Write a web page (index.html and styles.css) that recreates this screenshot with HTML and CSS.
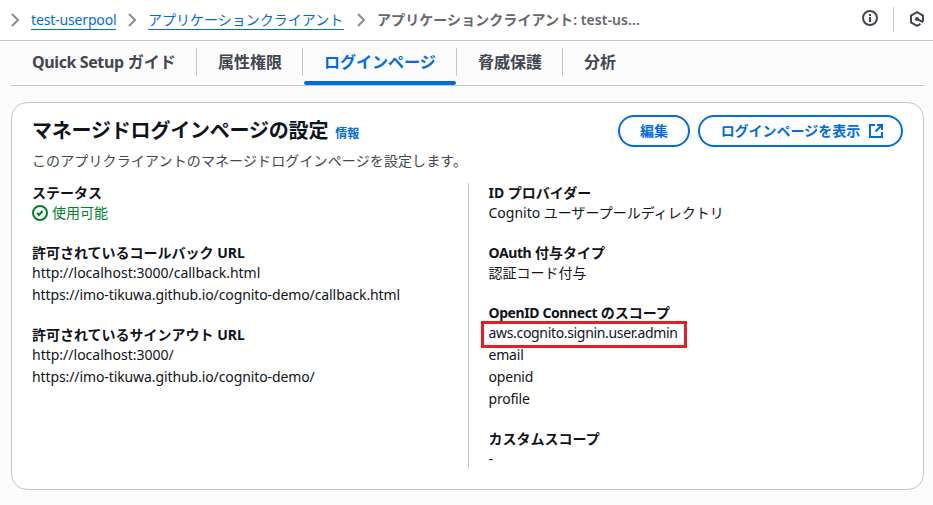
FILE: index.html
```html
<!DOCTYPE html>
<html lang="ja">
<head>
<meta charset="utf-8">
<title>Amazon Cognito</title>
<link rel="stylesheet" href="styles.css">
</head>
<body>
<header class="topbar">
  <nav class="crumbs">
    <svg class="chev" viewBox="0 0 16 16"><path d="M5 2l6 6-6 6"/></svg>
    <a class="crumb crumb-pool" href="#">test-userpool</a>
    <svg class="chev" viewBox="0 0 16 16"><path d="M5 2l6 6-6 6"/></svg>
    <a class="crumb crumb-clients" href="#">アプリケーションクライアント</a>
    <svg class="chev" viewBox="0 0 16 16"><path d="M5 2l6 6-6 6"/></svg>
    <span class="crumb-current">アプリケーションクライアント: test-us...</span>
  </nav>
  <div class="tools">
    <svg class="icon-info" viewBox="0 0 16 16"><circle cx="8" cy="8" r="7"/><path d="M8 12V7M8 6V4"/></svg>
    <svg class="icon-hex" viewBox="0 0 16 16"><path d="M14 10.500V4.500L8 1.200 2 4.500v7l6 3.300 3.500-2"/><path d="M8 8l6 3.200"/><circle class="dot" cx="8" cy="8" r="2"/></svg>
  </div>
</header>
<main>
  <nav class="tabs">
    <a class="tab tab-setup"><span class="lat">Quick Setup</span> ガイド</a>
    <a class="tab tab-attr">属性権限</a>
    <a class="tab tab-login active">ログインページ</a>
    <a class="tab tab-threat">脅威保護</a>
    <a class="tab tab-last">分析</a>
  </nav>
  <section class="card">
    <div class="card-head">
      <div>
        <h2>マネージドログインページの設定<a class="info">情報</a></h2>
        <p class="desc">このアプリクライアントのマネージドログインページを設定します。</p>
      </div>
      <div class="actions">
        <button class="btn btn-edit">編集</button>
        <button class="btn btn-view">ログインページを表示<svg viewBox="0 0 16 16"><path d="M7 2H2v12h12V9"/><path d="M9 2h5v5M14 2L7.500 8.500"/></svg></button>
      </div>
    </div>
    <div class="columns">
      <dl class="col">
        <dt>ステータス</dt>
        <dd class="status"><svg viewBox="0 0 16 16"><circle cx="8" cy="8" r="7"/><path d="M5 8l2 2 3.500-4"/></svg>使用可能</dd>
        <dt>許可されているコールバック URL</dt>
        <dd>http://localhost:3000/callback.html</dd>
        <dd class="url">https://imo-tikuwa.github.io/cognito-demo/callback.html</dd>
        <dt>許可されているサインアウト URL</dt>
        <dd>http://localhost:3000/</dd>
        <dd class="url">https://imo-tikuwa.github.io/cognito-demo/</dd>
      </dl>
      <dl class="col col-right">
        <dt>ID プロバイダー</dt>
        <dd>Cognito ユーザープールディレクトリ</dd>
        <dt><span class="lat">OAuth</span> 付与タイプ</dt>
        <dd>認証コード付与</dd>
        <dt><span class="lat">OpenID Connect</span> のスコープ</dt>
        <dd><span class="marked">aws.cognito.signin.user.admin</span></dd>
        <dd class="scope">email</dd>
        <dd class="scope">openid</dd>
        <dd class="scope">profile</dd>
        <dt>カスタムスコープ</dt>
        <dd>-</dd>
      </dl>
    </div>
  </section>
</main>
</body>
</html>
```
FILE: styles.css
```css
*, *::before, *::after { box-sizing: border-box; }
body {
  margin: 0;
  height: 505px;
  overflow: hidden;
  background: #fcfcfd;
  color: #0f141a;
  font: 14px/20px "Noto Sans", "Noto Sans CJK JP", sans-serif;
  white-space: nowrap;
}
svg { fill: none; stroke: currentColor; stroke-width: 2; flex: none; }
.topbar {
  height: 41px;
  background: #fff;
  border-bottom: 1px solid #c6c6cd;
  display: flex;
  justify-content: space-between;
}
.crumbs { display: flex; align-items: center; padding-left: 7px; height: 40px; }
.chev { width: 16px; height: 16px; color: #8c8c94; margin-right: 8px; }
.crumb {
  color: #006ce0;
  text-decoration: none;
  border-bottom: 1px solid #006ce0;
  line-height: 18px;
  margin-right: 8px;
}
.crumb-pool { width: 85px; letter-spacing: -0.15px; }
.crumb-clients { width: 196px; margin-right: 9px; }
.crumb-current { color: #656871; font-weight: 600; letter-spacing: 0.07px; }
.tools { position: relative; display: flex; color: #424650; padding-right: 8px; }
.tools svg { width: 16px; height: 16px; }
.tools::after {
  content: "";
  position: absolute;
  left: 31px;
  top: 7px;
  width: 1px;
  height: 25px;
  background: #c6c6cd;
}
.icon-info { margin-top: 10px; }
.icon-hex { margin-top: 11px; margin-left: 31px; }
.dot { fill: currentColor; stroke: none; }
main { padding: 0 9px 0 11px; }
.tabs {
  display: flex;
  height: 45px;
  border-bottom: 1px solid #c6c6cd;
  font-size: 16px;
  font-weight: 700;
  color: #424650;
}
.tab { position: relative; line-height: 42px; padding-left: 21px; }
.tab:not(.tab-last)::after {
  content: "";
  position: absolute;
  right: 0;
  top: 7px;
  width: 1px;
  height: 28px;
  background: #c6c6cd;
}
.tab-setup { width: 186px; }
.tab-attr { width: 106px; }
.tab-login { width: 154px; }
.tab-threat { width: 106px; }
.active { color: #006ce0; }
.active::before {
  content: "";
  position: absolute;
  left: 1px;
  right: 1px;
  bottom: 0;
  height: 4px;
  border-radius: 2px;
  background: #006ce0;
}
.card {
  margin-top: 16px;
  height: 388px;
  border: 1px solid #c6c6cd;
  border-radius: 16px;
  background: #fff;
  padding: 12px 20px 0;
}
.card-head { display: flex; justify-content: space-between; height: 68px; }
h2 {
  margin: 0;
  padding-top: 4px;
  font-size: 20px;
  line-height: 24px;
  font-weight: 700;
  letter-spacing: -0.2px;
}
.info { color: #006ce0; font-size: 12px; letter-spacing: 0; margin-left: 7px; }
.desc { margin: 5px 0 0; color: #424650; letter-spacing: 0.12px; }
.actions { display: flex; gap: 8px; }
.btn {
  height: 32px;
  border: 2px solid #006ce0;
  border-radius: 16px;
  background: #fff;
  color: #006ce0;
  font: 700 14px/20px "Noto Sans", "Noto Sans CJK JP", sans-serif;
  padding: 0;
  display: flex;
  align-items: center;
  justify-content: center;
}
.btn svg { width: 16px; height: 16px; margin-left: 8px; }
.btn-edit { width: 72px; }
.btn-view { width: 205px; padding-left: 4px; }
.columns { display: grid; grid-template-columns: 436px 1fr; }
.col { margin: 0; padding-top: 1px; height: 286px; }
.col-right { border-left: 1px solid #c6c6cd; padding-left: 19.5px; }
dt { font-weight: 700; line-height: 18px; height: 18px; }
dd { margin: 0; line-height: 22px; height: 22px; }
dd + dt { margin-top: 20px; }
.lat { letter-spacing: -0.4px; }
.url { letter-spacing: -0.1px; }
.scope { letter-spacing: -0.2px; }
.status { display: flex; align-items: center; gap: 4px; color: #00802f; }
.status svg { width: 16px; height: 16px; }
.marked { position: relative; letter-spacing: -0.33px; }
.marked::before {
  content: "";
  position: absolute;
  left: -7.5px;
  top: -2px;
  width: 206px;
  height: 27px;
  border: 3px solid #ed1c24;
}
```
